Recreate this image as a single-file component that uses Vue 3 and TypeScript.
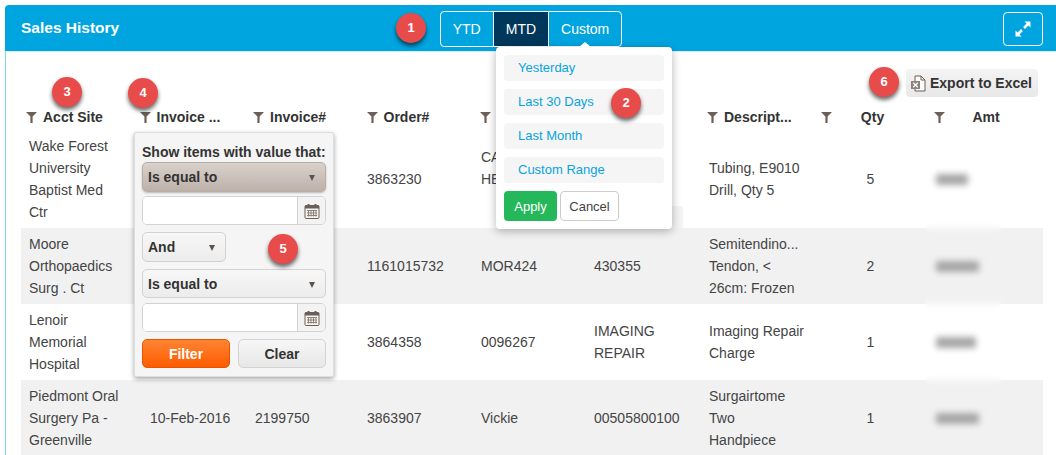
<template>
  <div class="page">
    <section class="panel">
      <header class="panel-head">
        <h1 class="title">Sales History</h1>
        <div class="range-group">
          <button v-for="r in ranges" :key="r" class="range-btn" :class="{ active: r === 'MTD' }">{{ r }}</button>
        </div>
        <button class="expand-btn" aria-label="Expand">
          <svg width="16" height="16" viewBox="0 0 16 16">
            <path d="M15.5 .5 L15.5 6.6 L13.4 4.5 L10 7.9 L8.1 6 L11.5 2.6 L9.4 .5 Z" fill="#fff" />
            <path d="M.5 15.5 L.5 9.4 L2.6 11.5 L6 8.1 L7.9 10 L4.5 13.4 L6.6 15.5 Z" fill="#fff" />
          </svg>
        </button>
      </header>

      <div class="panel-body">
        <div class="toolbar">
          <button class="export-btn">
            <svg width="16" height="17" viewBox="0 0 16 17">
              <path d="M5 1 H11 L15 5 V16 H5 Z" fill="#fbfbfb" stroke="#6b5f58" stroke-width="1" />
              <path d="M11 1 V5 H15" fill="none" stroke="#6b5f58" stroke-width="1" />
              <rect x="1" y="6" width="9" height="8" fill="#8d827b" />
              <path d="M3.2 7.8 L7.8 12.2 M7.8 7.8 L3.2 12.2" stroke="#fff" stroke-width="1.3" />
            </svg>
            Export to Excel
          </button>
        </div>

        <div class="thead">
          <div v-for="c in columns" :key="c.label" class="th">
            <svg class="funnel" width="11" height="11" viewBox="0 0 11 11">
              <path d="M0 0 H11 L6.6 4.6 V11 H4.4 V4.6 Z" fill="#6b5f58" />
            </svg>
            <span class="th-label" :class="{ centered: c.centered }">{{ c.label }}</span>
          </div>
        </div>

        <div v-for="(row, i) in rows" :key="i" class="tr" :class="{ odd: i % 2 === 1 }">
          <div class="td" v-for="(cell, j) in row.cells" :key="j">
            <div v-for="(line, k) in cell" :key="k" class="line">{{ line }}</div>
          </div>
          <div class="td center">{{ row.qty }}</div>
          <div class="td">
            <span class="amt" :style="{ width: `${row.amt}px` }"></span>
          </div>
        </div>
      </div>
    </section>

    <div class="blur-band"></div>
    <div class="stray-patch"></div>

    <div class="date-menu">
      <span class="date-menu-arrow"></span>
      <a v-for="p in presets" :key="p" class="preset">{{ p }}</a>
      <div class="date-actions">
        <button class="apply-btn">Apply</button>
        <button class="cancel-btn">Cancel</button>
      </div>
    </div>

    <div class="filter-menu">
      <div class="filter-title">Show items with value that:</div>
      <div class="select selected">Is equal to<i class="caret"></i></div>
      <div class="date-input">
        <input type="text" />
        <span class="addon">
          <svg width="16" height="16" viewBox="0 0 16 16">
            <rect x="1" y="2.5" width="14" height="13" rx="1" fill="#f6f4f2" stroke="#6b5f58" />
            <rect x="1" y="2.5" width="14" height="3" fill="#6b5f58" />
            <rect x="3.5" y="1" width="2" height="3" fill="#6b5f58" />
            <rect x="10.5" y="1" width="2" height="3" fill="#6b5f58" />
            <path d="M3 7.5h10M3 10h10M3 12.5h10M4.5 7v6.5M7 7v6.5M9.5 7v6.5M12 7v6.5" stroke="#8d827b" stroke-width="1" />
          </svg>
        </span>
      </div>
      <div class="select and">And<i class="caret"></i></div>
      <div class="select second">Is equal to<i class="caret"></i></div>
      <div class="date-input tight">
        <input type="text" />
        <span class="addon">
          <svg width="16" height="16" viewBox="0 0 16 16">
            <rect x="1" y="2.5" width="14" height="13" rx="1" fill="#f6f4f2" stroke="#6b5f58" />
            <rect x="1" y="2.5" width="14" height="3" fill="#6b5f58" />
            <rect x="3.5" y="1" width="2" height="3" fill="#6b5f58" />
            <rect x="10.5" y="1" width="2" height="3" fill="#6b5f58" />
            <path d="M3 7.5h10M3 10h10M3 12.5h10M4.5 7v6.5M7 7v6.5M9.5 7v6.5M12 7v6.5" stroke="#8d827b" stroke-width="1" />
          </svg>
        </span>
      </div>
      <div class="filter-actions">
        <button class="filter-btn">Filter</button>
        <button class="clear-btn">Clear</button>
      </div>
    </div>

    <span
      v-for="b in badges"
      :key="b.n"
      class="badge"
      :style="{ left: `${b.x - 15}px`, top: `${b.y - 15}px` }"
    >{{ b.n }}</span>
  </div>
</template>

<script setup lang="ts">
const ranges = ['YTD', 'MTD', 'Custom'];
const presets = ['Yesterday', 'Last 30 Days', 'Last Month', 'Custom Range'];

// the two labels under the date menu can't be read in the reference
const columns = [
  { label: 'Acct Site' },
  { label: 'Invoice ...' },
  { label: 'Invoice#' },
  { label: 'Order#' },
  { label: 'I' },
  { label: '' },
  { label: 'Descript...' },
  { label: 'Qty', centered: true },
  { label: 'Amt', centered: true },
];

const rows = [
  {
    cells: [
      ['Wake Forest', 'University', 'Baptist Med', 'Ctr'],
      [''],
      [''],
      ['3863230'],
      ['CA', 'HE', '\u00a0'],
      [''],
      ['Tubing, E9010', 'Drill, Qty 5'],
    ],
    qty: 5,
    amt: 32,
  },
  {
    cells: [
      ['Moore', 'Orthopaedics', 'Surg . Ct'],
      [''],
      [''],
      ['1161015732'],
      ['MOR424'],
      ['430355'],
      ['Semitendino...', 'Tendon, <', '26cm: Frozen'],
    ],
    qty: 2,
    amt: 43,
  },
  {
    cells: [
      ['Lenoir', 'Memorial', 'Hospital'],
      [''],
      [''],
      ['3864358'],
      ['0096267'],
      ['IMAGING', 'REPAIR'],
      ['Imaging Repair', 'Charge'],
    ],
    qty: 1,
    amt: 40,
  },
  {
    cells: [
      ['Piedmont Oral', 'Surgery Pa -', 'Greenville'],
      ['10-Feb-2016'],
      ['2199750'],
      ['3863907'],
      ['Vickie'],
      ['00505800100'],
      ['Surgairtome', 'Two', 'Handpiece'],
    ],
    qty: 1,
    amt: 43,
  },
];

const badges = [
  { n: 1, x: 411, y: 28 },
  { n: 2, x: 626, y: 103 },
  { n: 3, x: 67, y: 92 },
  { n: 4, x: 143, y: 93 },
  { n: 5, x: 283, y: 249 },
  { n: 6, x: 884, y: 82 },
];
</script>

<style scoped>
.page {
  position: relative;
  width: 1056px;
  height: 455px;
  overflow: hidden;
  background: #fff;
  font-family: "Liberation Sans", Arial, sans-serif;
  font-size: 14px;
  color: #444;
}
button {
  font-family: inherit;
  cursor: pointer;
}
.panel {
  margin: 5px 0 0 5px;
}
.panel-head {
  display: grid;
  grid-template-columns: 1fr auto 1fr;
  align-items: center;
  height: 46px;
  padding: 0 13px 0 16px;
  background: #00a5e0;
  border-radius: 4px 0 0 0;
}
.title {
  margin: 0;
  font-size: 15.5px;
  font-weight: 700;
  color: #fff;
}
.range-group {
  display: flex;
  height: 34px;
  margin: 1px 0 0 -2px;
  border: 1px solid #fff;
  border-radius: 4px;
  overflow: hidden;
}
.range-btn {
  padding: 0 12px;
  border: 0;
  border-left: 1px solid #fff;
  background: transparent;
  color: #fff;
  font-size: 14px;
}
.range-btn:first-child {
  border-left: 0;
}
.range-btn.active {
  background: #00375a;
}
.expand-btn {
  justify-self: end;
  display: flex;
  align-items: center;
  justify-content: center;
  width: 40px;
  height: 34px;
  margin-top: 1px;
  padding: 0;
  background: transparent;
  border: 1px solid #fff;
  border-radius: 4px;
}
.panel-body {
  height: 404px;
  border-left: 1px solid #7fd2ef;
  border-top: 1px solid #d8f0fa;
  padding-top: 17px;
}
.toolbar {
  display: flex;
  justify-content: flex-end;
  height: 28px;
  padding-right: 18px;
}
.export-btn {
  display: flex;
  align-items: center;
  gap: 4px;
  width: 132px;
  height: 28px;
  padding: 0 0 0 4px;
  border: 0;
  border-radius: 4px;
  background: linear-gradient(#f4f4f4, #e8e8e8);
  color: #333;
  font-size: 14px;
  font-weight: 700;
  white-space: nowrap;
}
.thead {
  display: grid;
  grid-template-columns: repeat(9, 113.5px);
  height: 33px;
  margin-left: 20px;
  padding-top: 14px;
  box-sizing: border-box;
}
.th {
  display: flex;
  align-items: center;
  gap: 6px;
  height: 12px;
  font-weight: 700;
  color: #333;
  white-space: nowrap;
}
.funnel {
  flex: none;
}
.th-label.centered {
  width: 70px;
  text-align: center;
}
.tr {
  display: grid;
  grid-template-columns: 121px 105px 112px 114px 113px 115px 114px 111px 117px;
  margin: 0 13px 0 15px;
  padding: 5px 0;
  line-height: 22px;
}
.tr.odd {
  background: #f1f1f1;
}
.td {
  display: flex;
  flex-direction: column;
  justify-content: center;
  padding-left: 8px;
  white-space: nowrap;
}
.td.center {
  padding-left: 0;
  align-items: center;
}
.line {
  min-height: 22px;
}
.amt {
  display: block;
  height: 11px;
  margin-left: 2px;
  background: #a6a6a6;
  border-radius: 2px;
}
.blur-band {
  position: absolute;
  left: 925px;
  top: 135px;
  width: 76px;
  height: 320px;
  backdrop-filter: blur(3px);
}
.stray-patch {
  position: absolute;
  left: 672px;
  top: 206px;
  width: 11px;
  height: 22px;
  background: #f4f4f4;
}
.date-menu {
  position: absolute;
  left: 496px;
  top: 47px;
  box-sizing: border-box;
  display: flex;
  flex-direction: column;
  gap: 8px;
  width: 176px;
  height: 182px;
  padding: 8px;
  background: #fff;
  border-radius: 4px;
  box-shadow: 0 2px 10px rgba(0, 0, 0, 0.3);
}
.date-menu-arrow {
  position: absolute;
  left: 83px;
  top: -5px;
  border-left: 6px solid transparent;
  border-right: 6px solid transparent;
  border-bottom: 5px solid #fff;
}
.preset {
  height: 26px;
  padding-left: 14px;
  line-height: 26px;
  font-size: 13px;
  color: #08a4de;
  background: #f5f5f5;
  border-radius: 4px;
}
.date-actions {
  display: flex;
  gap: 3px;
}
.apply-btn,
.cancel-btn {
  height: 30px;
  padding: 0;
  border-radius: 4px;
  font-size: 13px;
}
.apply-btn {
  width: 53px;
  border: 0;
  background: #25b85a;
  color: #fff;
}
.cancel-btn {
  width: 59px;
  border: 1px solid #ccc;
  background: #fff;
  color: #444;
}
.filter-menu {
  position: absolute;
  left: 134px;
  top: 132px;
  box-sizing: border-box;
  width: 200px;
  height: 245px;
  padding: 10px 7px 0;
  background: #f5f5f5;
  border: 1px solid #ddd;
  box-shadow: 0 2px 5px rgba(0, 0, 0, 0.35);
  border-radius: 2px;
  color: #333;
}
.filter-title {
  height: 19px;
  line-height: 19px;
  font-size: 14px;
  font-weight: 700;
  white-space: nowrap;
}
.select {
  position: relative;
  box-sizing: border-box;
  height: 30px;
  padding-left: 5px;
  line-height: 28px;
  font-weight: 700;
  border: 1px solid #d3d3d3;
  border-radius: 5px;
  background: linear-gradient(#f7f7f7, #ececec);
}
.select.selected {
  border-color: #b9aea6;
  background: linear-gradient(#d9d1cb, #bdb2aa);
  box-shadow: 0 1px 2px rgba(0, 0, 0, 0.25);
}
.select.and {
  width: 84px;
  margin-top: 7px;
}
.select.second {
  height: 29px;
  margin-top: 7px;
}
.caret {
  position: absolute;
  right: 10px;
  top: 12px;
  border-left: 3.5px solid transparent;
  border-right: 3.5px solid transparent;
  border-top: 6px solid #5f544d;
}
.date-input {
  display: flex;
  box-sizing: border-box;
  height: 29px;
  margin-top: 4px;
  background: #fff;
  border: 1px solid #d3d3d3;
  border-radius: 5px;
  overflow: hidden;
}
.date-input.tight {
  margin-top: 5px;
}
.date-input input {
  flex: 1;
  min-width: 0;
  padding: 0;
  border: 0;
  background: #fff;
}
.addon {
  display: flex;
  align-items: center;
  justify-content: center;
  width: 27px;
  border-left: 1px solid #d3d3d3;
  background: #f3f3f3;
}
.filter-actions {
  display: flex;
  justify-content: space-between;
  margin-top: 7px;
}
.filter-btn,
.clear-btn {
  width: 88px;
  height: 29px;
  padding: 0;
  border-radius: 5px;
  font-size: 14px;
  font-weight: 700;
}
.filter-btn {
  border: 1px solid #e85500;
  background: linear-gradient(#ff8433, #ff5c00);
  color: #fff;
}
.clear-btn {
  border: 1px solid #d3d3d3;
  background: linear-gradient(#f7f7f7, #e7e7e7);
  color: #333;
}
.badge {
  position: absolute;
  width: 30px;
  height: 30px;
  line-height: 30px;
  text-align: center;
  border-radius: 50%;
  background: #e84c4a;
  color: #fff;
  font-size: 13px;
  font-weight: 700;
  box-shadow: 0 3px 4px rgba(0, 0, 0, 0.6);
}
</style>
